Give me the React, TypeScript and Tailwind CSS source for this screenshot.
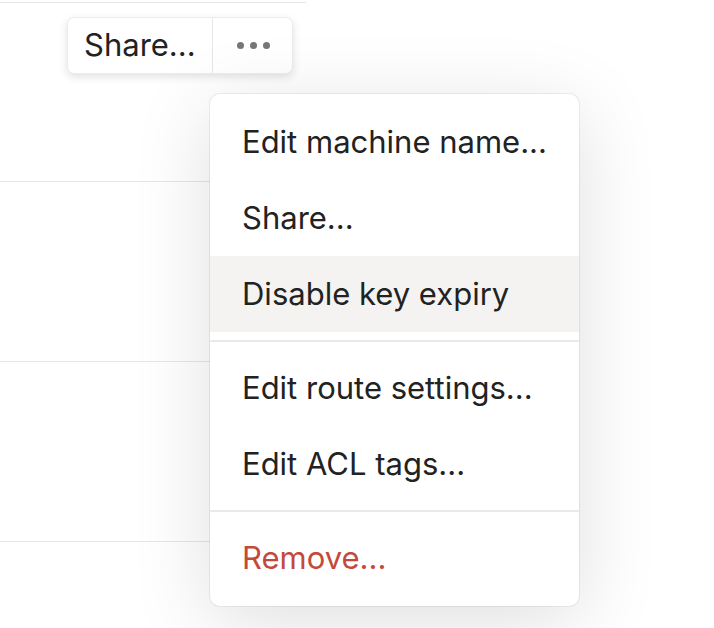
import React from 'react';

type MenuItem = { label: string; danger?: boolean; active?: boolean } | 'sep';

const items: MenuItem[] = [
    { label: 'Edit machine name...' },
    { label: 'Share...' },
    { label: 'Disable key expiry', active: true },
    'sep',
    { label: 'Edit route settings...' },
    { label: 'Edit ACL tags...' },
    'sep',
    { label: 'Remove...', danger: true },
];

function RowActions() {
    return (
        <div className="flex rounded-[7px] bg-white border border-[#ececec] shadow-[0_3px_8px_rgba(0,0,0,0.12)] h-[57px] w-[226px]">
            <button className="w-[144px] shrink-0 h-full flex items-center pl-[16px] text-[31px] text-[#222]">
                Share...
            </button>
            <div className="w-px shrink-0 bg-[#e6e6e6]" />
            <button className="w-[80px] shrink-0 h-full flex items-center justify-center gap-[6px]">
                <span className="w-[7px] h-[7px] rounded-full bg-[#777]" />
                <span className="w-[7px] h-[7px] rounded-full bg-[#777]" />
                <span className="w-[7px] h-[7px] rounded-full bg-[#777]" />
            </button>
        </div>
    );
}

function ActionsMenu() {
    return (
        <div className="absolute left-[210px] top-[94px] w-[369px] rounded-[10px] bg-white py-[10px] shadow-[0_0_0_1px_rgba(0,0,0,0.06),0_16px_80px_rgba(0,0,0,0.13)]">
            {items.map((item, i) =>
                item === 'sep' ? (
                    <div key={i} className="my-[8px] h-[2px] bg-[#e9e9e9]" />
                ) : (
                    <div
                        key={i}
                        className={
                            'h-[76px] flex items-center pl-[32px] text-[31px] ' +
                            (item.active ? 'bg-[#f4f3f2] ' : '') +
                            (item.danger ? 'text-[#c4493b]' : 'text-[#222]')
                        }
                    >
                        {item.label}
                    </div>
                )
            )}
        </div>
    );
}

export default function App() {
    return (
        <div className="relative w-[714px] h-[628px] overflow-hidden bg-white" style={{ fontFamily: 'Inter, "Noto Sans", sans-serif' }}>
            <div className="w-[306px] pt-[2px]">
                <div className="border-t border-[#e6e6e6] h-[180px] border-b flex justify-end pt-[14px] pr-[13px]">
                    <RowActions />
                </div>
                <div className="h-[180px] border-b border-[#e6e6e6]" />
                <div className="h-[180px] border-b border-[#e6e6e6]" />
            </div>
            <ActionsMenu />
        </div>
    );
}
